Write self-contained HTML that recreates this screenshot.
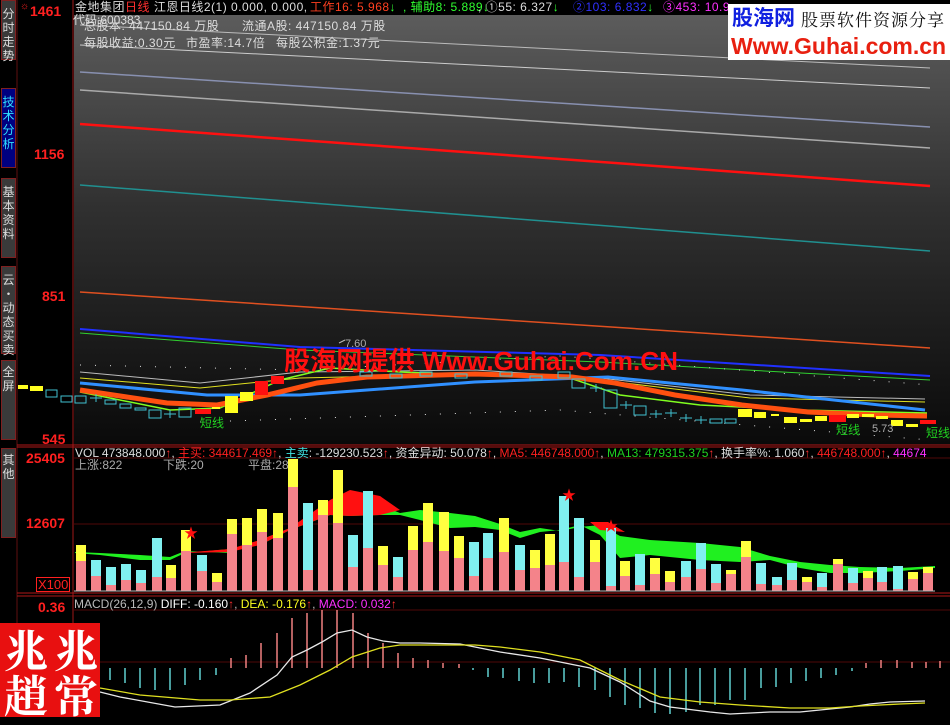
<!DOCTYPE html>
<html><head><meta charset="utf-8"><style>
*{margin:0;padding:0}
body{width:950px;height:717px;background:#000;overflow:hidden;position:relative;font-family:"Liberation Sans","Noto Sans CJK SC",sans-serif}
.t{position:absolute;font-size:12px;line-height:13px;white-space:nowrap}
.tab{position:absolute;left:1px;width:15px;background:#3a3a3a;border:1px solid #802020;color:#ddd;font-size:12px;line-height:14px;text-align:center;font-family:"Noto Sans CJK SC",sans-serif}
</style></head><body>
<svg width="950" height="717" style="position:absolute;left:0;top:0">
<defs><linearGradient id="bg" x1="0" y1="0" x2="0" y2="1">
<stop offset="0" stop-color="#5c5c5c"/><stop offset="0.45" stop-color="#303030"/><stop offset="1" stop-color="#0a0a0a"/></linearGradient></defs>
<rect x="74" y="15" width="876" height="430" fill="url(#bg)"/>
<line x1="73" y1="0" x2="73" y2="717" stroke="#a01818"/>
<line x1="17" y1="0" x2="17" y2="717" stroke="#601010"/>
<line x1="17" y1="445" x2="950" y2="445" stroke="#b01818"/>
<line x1="17" y1="447" x2="950" y2="447" stroke="#b01818"/>
<line x1="17" y1="593" x2="950" y2="593" stroke="#b01818"/>
<line x1="17" y1="596" x2="950" y2="596" stroke="#b01818"/>
<line x1="74" y1="458" x2="950" y2="458" stroke="#500808"/>
<line x1="74" y1="524" x2="950" y2="524" stroke="#500808"/>
<line x1="74" y1="610" x2="950" y2="610" stroke="#500808"/>
<line x1="74" y1="662" x2="950" y2="662" stroke="#500808"/>
<polyline points="80,25 930,68" stroke="#bbb" fill="none"/>
<polyline points="80,45 930,88" stroke="#ccc" fill="none"/>
<polyline points="80,72 930,127" stroke="#8890b0" fill="none" stroke-width="1.5"/>
<polyline points="80,90 930,148" stroke="#aaa" fill="none" stroke-width="1.5"/>
<polyline points="80,124 930,186" stroke="#ff1010" fill="none" stroke-width="2.5"/>
<polyline points="80,185 930,251" stroke="#209090" fill="none" stroke-width="1.5"/>
<polyline points="80,292 930,348" stroke="#e05020" fill="none" stroke-width="1.5"/>
<polyline points="80,329 300,347 600,355 930,376" stroke="#2030ff" fill="none" stroke-width="2"/>
<polyline points="80,333 300,350 600,362 930,380" stroke="#30d030" fill="none" stroke-width="1"/>
<polyline points="80,365 300,370 560,356 930,385" stroke="#ddd" fill="none" stroke-dasharray="1,14"/>
<polyline points="200,422 560,410 930,440" stroke="#ddd" fill="none" stroke-dasharray="1,14"/>
<polyline points="80,372 200,383 300,372 475,370 600,378 750,395 925,399" stroke="#bbb" fill="none"/>
<polyline points="80,378 200,388 300,378 475,374 600,380 750,398 925,402" stroke="#e0e020" fill="none"/>
<polyline points="80,392 170,410 220,408 280,380 330,368 400,372 475,375 570,378 620,395 700,405 800,410 927,413" stroke="#80ff20" fill="none" stroke-width="1.5"/>
<polyline points="80,383 207,395 300,395 367,390 475,382 608,377 742,390 925,410" stroke="#3090ff" fill="none" stroke-width="3"/>
<polyline points="80,390 167,403 217,405 267,395 317,383 367,377 475,374 572,377 615,383 675,395 742,405 808,412 875,415 927,416" stroke="#ff5010" fill="none" stroke-width="5"/>
<g fill="#ffff20">
<rect x="18" y="385" width="10" height="4"/><rect x="30" y="386" width="13" height="5"/>
<rect x="212" y="407" width="8" height="2"/><rect x="225" y="396" width="13" height="17"/><rect x="240" y="392" width="13" height="9"/>
<rect x="738" y="409" width="14" height="8"/><rect x="754" y="412" width="12" height="6"/><rect x="771" y="414" width="8" height="2"/><rect x="784" y="417" width="13" height="6"/><rect x="800" y="419" width="12" height="3"/><rect x="815" y="416" width="12" height="5"/><rect x="847" y="414" width="12" height="4"/><rect x="862" y="414" width="12" height="3"/><rect x="876" y="416" width="12" height="3"/><rect x="891" y="420" width="12" height="6"/><rect x="906" y="424" width="12" height="3"/>
</g>
<g fill="#ff1010"><rect x="195" y="409" width="16" height="5"/><rect x="255" y="381" width="13" height="14"/><rect x="271" y="376" width="13" height="8"/><rect x="829" y="415" width="17" height="7"/><rect x="920" y="420" width="16" height="4"/></g>
<g fill="none" stroke="#40c0d0">
<rect x="46" y="390" width="11" height="7"/><rect x="61" y="396" width="11" height="6"/><rect x="75" y="396" width="11" height="7"/><rect x="105" y="400" width="11" height="4"/><rect x="120" y="404" width="11" height="4"/><rect x="135" y="408" width="11" height="2"/><rect x="149" y="410" width="12" height="8"/><rect x="179" y="408" width="12" height="9"/>
<rect x="558" y="372" width="12" height="6"/><rect x="572" y="379" width="13" height="9"/><rect x="604" y="390" width="13" height="18"/><rect x="634" y="406" width="12" height="9"/><rect x="710" y="419" width="12" height="4"/><rect x="725" y="419" width="11" height="4"/>
<rect x="360" y="372" width="12" height="4"/><rect x="390" y="374" width="12" height="4"/><rect x="420" y="372" width="12" height="4"/><rect x="455" y="374" width="12" height="4"/><rect x="500" y="372" width="12" height="4"/><rect x="530" y="376" width="12" height="4"/>
<path d="M90,398h12M96,394v8M164,414h12M170,410v8M590,388h12M596,384v8M620,405h12M626,401v8M650,414h12M656,410v8M665,413h12M671,409v8M680,418h12M686,414v8M695,420h12M701,416v8"/>
</g>
<polyline points="339,343 345,340" stroke="#bbb" fill="none"/>
<text x="345" y="347" fill="#aaa" font-size="11" font-family="Liberation Sans">7.60</text>
<text x="872" y="432" fill="#aaa" font-size="11" font-family="Liberation Sans">5.73</text>
<g font-family="Noto Sans CJK SC,sans-serif" font-size="12" fill="#20d020">
<text x="200" y="427">短线</text><text x="836" y="434">短线</text><text x="926" y="437">短线</text></g>
<text x="284" y="370" fill="#ff1010" font-size="26" font-weight="bold" font-family="Liberation Sans,Noto Sans CJK SC,sans-serif" textLength="394" lengthAdjust="spacingAndGlyphs">股海网提供 Www.Guhai.Com.CN</text>
<polygon fill="#20f020" points="75,552 100,553 140,555 170,557 185,551 230,553 260,540 290,528 330,505 350,498 380,505 400,513 420,510 450,513 475,516 500,524 520,532 540,528 560,531 580,527 600,525 620,536 650,540 700,543 740,547 770,556 800,562 830,565 860,567 900,568 935,566 935,568 900,571 860,573 830,573 800,568 770,560 740,562 700,560 650,555 620,558 600,535 580,525 560,530 540,532 520,538 500,530 475,527 450,528 420,520 400,515 380,515 350,516 330,515 290,530 260,545 230,549 185,553 170,560 140,560 100,555 75,553"/>
<polygon fill="#ff1010" points="180,553 230,549 260,540 290,528 330,500 350,490 380,496 400,510 380,515 350,516 330,515 290,530 260,545 230,552"/>
<polygon fill="#ff1010" points="590,522 608,522 625,532 600,530"/>
<g>
<rect x="76" y="545" width="10" height="46" fill="#f4838a"/><rect x="76" y="545" width="10" height="16" fill="#ffff40"/>
<rect x="91" y="560" width="10" height="31" fill="#f4838a"/><rect x="91" y="560" width="10" height="16" fill="#80f0f0"/>
<rect x="106" y="567" width="10" height="24" fill="#f4838a"/><rect x="106" y="567" width="10" height="18" fill="#80f0f0"/>
<rect x="121" y="564" width="10" height="27" fill="#f4838a"/><rect x="121" y="564" width="10" height="16" fill="#80f0f0"/>
<rect x="136" y="570" width="10" height="21" fill="#f4838a"/><rect x="136" y="570" width="10" height="13" fill="#80f0f0"/>
<rect x="152" y="538" width="10" height="53" fill="#f4838a"/><rect x="152" y="538" width="10" height="39" fill="#80f0f0"/>
<rect x="166" y="565" width="10" height="26" fill="#f4838a"/><rect x="166" y="565" width="10" height="13" fill="#ffff40"/>
<rect x="181" y="530" width="10" height="61" fill="#f4838a"/><rect x="181" y="530" width="10" height="21" fill="#ffff40"/>
<rect x="197" y="555" width="10" height="36" fill="#f4838a"/><rect x="197" y="555" width="10" height="16" fill="#80f0f0"/>
<rect x="212" y="573" width="10" height="18" fill="#f4838a"/><rect x="212" y="573" width="10" height="9" fill="#ffff40"/>
<rect x="227" y="519" width="10" height="72" fill="#f4838a"/><rect x="227" y="519" width="10" height="15" fill="#ffff40"/>
<rect x="242" y="518" width="10" height="73" fill="#f4838a"/><rect x="242" y="518" width="10" height="27" fill="#ffff40"/>
<rect x="257" y="509" width="10" height="82" fill="#f4838a"/><rect x="257" y="509" width="10" height="23" fill="#ffff40"/>
<rect x="273" y="513" width="10" height="78" fill="#f4838a"/><rect x="273" y="513" width="10" height="25" fill="#ffff40"/>
<rect x="288" y="459" width="10" height="132" fill="#f4838a"/><rect x="288" y="459" width="10" height="28" fill="#ffff40"/>
<rect x="303" y="503" width="10" height="88" fill="#f4838a"/><rect x="303" y="503" width="10" height="67" fill="#80f0f0"/>
<rect x="318" y="500" width="10" height="91" fill="#f4838a"/><rect x="318" y="500" width="10" height="15" fill="#ffff40"/>
<rect x="333" y="470" width="10" height="121" fill="#f4838a"/><rect x="333" y="470" width="10" height="53" fill="#ffff40"/>
<rect x="348" y="535" width="10" height="56" fill="#f4838a"/><rect x="348" y="535" width="10" height="32" fill="#80f0f0"/>
<rect x="363" y="491" width="10" height="100" fill="#f4838a"/><rect x="363" y="491" width="10" height="57" fill="#80f0f0"/>
<rect x="378" y="546" width="10" height="45" fill="#f4838a"/><rect x="378" y="546" width="10" height="19" fill="#ffff40"/>
<rect x="393" y="557" width="10" height="34" fill="#f4838a"/><rect x="393" y="557" width="10" height="20" fill="#80f0f0"/>
<rect x="408" y="526" width="10" height="65" fill="#f4838a"/><rect x="408" y="526" width="10" height="24" fill="#ffff40"/>
<rect x="423" y="503" width="10" height="88" fill="#f4838a"/><rect x="423" y="503" width="10" height="39" fill="#ffff40"/>
<rect x="439" y="512" width="10" height="79" fill="#f4838a"/><rect x="439" y="512" width="10" height="39" fill="#ffff40"/>
<rect x="454" y="536" width="10" height="55" fill="#f4838a"/><rect x="454" y="536" width="10" height="22" fill="#ffff40"/>
<rect x="469" y="542" width="10" height="49" fill="#f4838a"/><rect x="469" y="542" width="10" height="34" fill="#80f0f0"/>
<rect x="483" y="533" width="10" height="58" fill="#f4838a"/><rect x="483" y="533" width="10" height="25" fill="#80f0f0"/>
<rect x="499" y="518" width="10" height="73" fill="#f4838a"/><rect x="499" y="518" width="10" height="34" fill="#ffff40"/>
<rect x="515" y="545" width="10" height="46" fill="#f4838a"/><rect x="515" y="545" width="10" height="25" fill="#80f0f0"/>
<rect x="530" y="550" width="10" height="41" fill="#f4838a"/><rect x="530" y="550" width="10" height="18" fill="#ffff40"/>
<rect x="545" y="534" width="10" height="57" fill="#f4838a"/><rect x="545" y="534" width="10" height="31" fill="#ffff40"/>
<rect x="559" y="496" width="10" height="95" fill="#f4838a"/><rect x="559" y="496" width="10" height="66" fill="#80f0f0"/>
<rect x="574" y="518" width="10" height="73" fill="#f4838a"/><rect x="574" y="518" width="10" height="59" fill="#80f0f0"/>
<rect x="590" y="540" width="10" height="51" fill="#f4838a"/><rect x="590" y="540" width="10" height="22" fill="#ffff40"/>
<rect x="606" y="528" width="10" height="63" fill="#f4838a"/><rect x="606" y="528" width="10" height="58" fill="#80f0f0"/>
<rect x="620" y="561" width="10" height="30" fill="#f4838a"/><rect x="620" y="561" width="10" height="15" fill="#ffff40"/>
<rect x="635" y="554" width="10" height="37" fill="#f4838a"/><rect x="635" y="554" width="10" height="31" fill="#80f0f0"/>
<rect x="650" y="558" width="10" height="33" fill="#f4838a"/><rect x="650" y="558" width="10" height="16" fill="#ffff40"/>
<rect x="665" y="571" width="10" height="20" fill="#f4838a"/><rect x="665" y="571" width="10" height="11" fill="#ffff40"/>
<rect x="681" y="561" width="10" height="30" fill="#f4838a"/><rect x="681" y="561" width="10" height="16" fill="#80f0f0"/>
<rect x="696" y="543" width="10" height="48" fill="#f4838a"/><rect x="696" y="543" width="10" height="26" fill="#80f0f0"/>
<rect x="711" y="564" width="10" height="27" fill="#f4838a"/><rect x="711" y="564" width="10" height="19" fill="#80f0f0"/>
<rect x="726" y="570" width="10" height="21" fill="#f4838a"/><rect x="726" y="570" width="10" height="4" fill="#ffff40"/>
<rect x="741" y="541" width="10" height="50" fill="#f4838a"/><rect x="741" y="541" width="10" height="16" fill="#ffff40"/>
<rect x="756" y="563" width="10" height="28" fill="#f4838a"/><rect x="756" y="563" width="10" height="21" fill="#80f0f0"/>
<rect x="772" y="577" width="10" height="14" fill="#f4838a"/><rect x="772" y="577" width="10" height="8" fill="#80f0f0"/>
<rect x="787" y="563" width="10" height="28" fill="#f4838a"/><rect x="787" y="563" width="10" height="17" fill="#80f0f0"/>
<rect x="802" y="577" width="10" height="14" fill="#f4838a"/><rect x="802" y="577" width="10" height="5" fill="#ffff40"/>
<rect x="817" y="573" width="10" height="18" fill="#f4838a"/><rect x="817" y="573" width="10" height="14" fill="#80f0f0"/>
<rect x="833" y="559" width="10" height="32" fill="#f4838a"/><rect x="833" y="559" width="10" height="5" fill="#ffff40"/>
<rect x="848" y="568" width="10" height="23" fill="#f4838a"/><rect x="848" y="568" width="10" height="15" fill="#80f0f0"/>
<rect x="863" y="571" width="10" height="20" fill="#f4838a"/><rect x="863" y="571" width="10" height="7" fill="#ffff40"/>
<rect x="877" y="567" width="10" height="24" fill="#f4838a"/><rect x="877" y="567" width="10" height="15" fill="#80f0f0"/>
<rect x="893" y="566" width="10" height="25" fill="#f4838a"/><rect x="893" y="566" width="10" height="23" fill="#80f0f0"/>
<rect x="908" y="572" width="10" height="19" fill="#f4838a"/><rect x="908" y="572" width="10" height="7" fill="#ffff40"/>
<rect x="923" y="567" width="10" height="24" fill="#f4838a"/><rect x="923" y="567" width="10" height="6" fill="#ffff40"/>
</g>
<line x1="74" y1="591" x2="935" y2="591" stroke="#bbb"/>
<g fill="#ff1010" font-size="14"><text x="184" y="538">★</text><text x="562" y="500">★</text><text x="604" y="531">★</text></g>
<g stroke="#60d0d0" stroke-width="1.5">
<path d="M110,668v12M125,668v15M140,668v20M155,668v22M170,668v22M185,668v17M200,668v12M216,668v7M473,668v2M488,668v9M503,668v10M519,668v13M534,668v15M549,668v15M564,668v14M579,668v19M595,668v22M610,668v29M625,668v37M640,668v40M655,668v45M670,668v46M686,668v44M700,668v37M715,668v37M730,668v32M745,668v32M761,668v20M776,668v19M791,668v15M806,668v13M821,668v10M836,668v7M852,668v3"/>
</g>
<g stroke="#f08080" stroke-width="1.5">
<path d="M231,668v-10M246,668v-13M261,668v-25M277,668v-35M292,668v-50M307,668v-55M322,668v-58M337,668v-58M353,668v-55M368,668v-35M383,668v-25M398,668v-15M413,668v-10M428,668v-8M443,668v-5M459,668v-4M866,668v-5M881,668v-8M897,668v-8M912,668v-6M926,668v-6M940,668v-7"/>
</g>
<polyline fill="none" stroke="#e8e8e8" stroke-width="1.3" points="100,692 120,697 175,707 220,705 250,693 277,675 292,657 307,650 322,642 337,633 352,630 367,637 383,641 400,643 420,643 460,644 475,647 500,652 540,658 590,668 620,682 650,701 670,707 710,712 730,714 770,712 800,712 830,709 850,707 870,704 890,702 925,701"/>
<polyline fill="none" stroke="#e0e020" stroke-width="1.3" points="100,688 140,695 200,700 230,700 270,697 300,685 330,670 352,657 380,648 400,645 440,645 475,645 500,647 540,652 580,660 620,680 660,697 700,702 740,705 790,708 830,708 860,706 900,704 925,703"/>
</svg>
<div class="tab" style="top:0;height:60px;padding-top:6px;box-sizing:border-box">分<br>时<br>走<br>势</div>
<div class="tab" style="top:88px;height:80px;background:#000080;color:#30e0ff;padding-top:6px;box-sizing:border-box">技<br>术<br>分<br>析</div>
<div class="tab" style="top:178px;height:80px;padding-top:6px;box-sizing:border-box">基<br>本<br>资<br>料</div>
<div class="tab" style="top:266px;height:88px;padding-top:6px;box-sizing:border-box">云<br>·<br>动<br>态<br>买<br>卖</div>
<div class="tab" style="top:360px;height:80px;padding-top:4px;box-sizing:border-box">全<br>屏</div>
<div class="tab" style="top:448px;height:90px;padding-top:4px;box-sizing:border-box">其<br>他</div>
<div class="t" style="left:30px;top:5px;color:#ff2020;font-weight:bold;font-size:14px">1461</div>
<div class="t" style="left:20px;top:0;color:#ff2020;font-size:10px">☼</div>
<div class="t" style="left:34px;top:148px;color:#ff2020;font-weight:bold;font-size:14px">1156</div>
<div class="t" style="left:42px;top:290px;color:#ff2020;font-weight:bold;font-size:14px">851</div>
<div class="t" style="left:42px;top:433px;color:#ff2020;font-weight:bold;font-size:14px">545</div>
<div class="t" style="left:26px;top:452px;color:#ff2020;font-weight:bold;font-size:14px">25405</div>
<div class="t" style="left:26px;top:517px;color:#ff2020;font-weight:bold;font-size:14px">12607</div>
<div class="t" style="left:36px;top:577px;color:#ff2020;font-size:13px;border:1px solid #ff2020;padding:0 1px">X100</div>
<div class="t" style="left:38px;top:601px;color:#ff2020;font-weight:bold;font-size:14px">0.36</div>
<div class="t" style="left:75px;top:1px;color:#ddd;letter-spacing:0.5px">金地集团<span style="color:#ff3030">日线</span> 江恩日线2(1) 0.000, 0.000,</div>
<div class="t" style="left:310px;top:1px;color:#ff4020;letter-spacing:0.5px">工作16: 5.968<span style="color:#30ff30">↓</span></div>
<div class="t" style="left:403px;top:1px;color:#30ff30;letter-spacing:0.5px">, 辅助8: 5.889↓</div>
<div class="t" style="left:478px;top:1px;color:#ddd;letter-spacing:0.5px">, ①55: 6.327<span style="color:#30ff30">↓</span></div>
<div class="t" style="left:573px;top:1px;color:#3030ff;letter-spacing:0.5px">②103: 6.832<span style="color:#30ff30">↓</span></div>
<div class="t" style="left:663px;top:1px;color:#ff30ff;letter-spacing:0.5px">③453: 10.9</div>
<div class="t" style="left:73px;top:14px;color:#ddd">代码:600383</div>
<div class="t" style="left:84px;top:20px;color:#ddd;letter-spacing:0.5px">总股本: 447150.84 万股</div>
<div class="t" style="left:242px;top:20px;color:#ddd;letter-spacing:0.5px">流通A股: 447150.84 万股</div>
<div class="t" style="left:84px;top:37px;color:#ddd;letter-spacing:0.5px">每股收益:0.30元</div>
<div class="t" style="left:186px;top:37px;color:#ddd;letter-spacing:0.5px">市盈率:14.7倍</div>
<div class="t" style="left:276px;top:37px;color:#ddd;letter-spacing:0.5px">每股公积金:1.37元</div>
<div style="position:absolute;left:728px;top:4px;width:222px;height:56px;background:#fff">
<div class="t" style="left:4px;top:3px;font-size:21px;line-height:24px;font-weight:bold;color:#1020e0">股海网</div>
<div class="t" style="left:73px;top:5px;font-size:17px;line-height:20px;color:#111;letter-spacing:1px;font-family:'Noto Serif CJK SC',serif">股票软件资源分享</div>
<div class="t" style="left:3px;top:29px;font-size:23px;line-height:26px;font-weight:bold;color:#e82010">Www.Guhai.com.cn</div>
</div>
<div class="t" style="left:75px;top:447px;color:#ddd">VOL 473848.000<span style="color:#ff3030">↑</span>, <span style="color:#ff2020">主买: 344617.469↑</span>, <span style="color:#40e0e0">主卖</span>: -129230.523<span style="color:#ff3030">↑</span>, 资金异动: 50.078<span style="color:#ff3030">↑</span>, <span style="color:#ff2020">MA5: 446748.000↑</span>, <span style="color:#20d020">MA13: 479315.375</span><span style="color:#ff3030">↑</span>, 换手率%: 1.060<span style="color:#ff3030">↑</span>, <span style="color:#ff2020">446748.000↑</span>, <span style="color:#ff30ff">44674</span></div>
<div class="t" style="left:75px;top:459px;color:#aaa">上涨:822</div>
<div class="t" style="left:163px;top:459px;color:#aaa">下跌:20</div>
<div class="t" style="left:248px;top:459px;color:#aaa">平盘:28</div>
<div class="t" style="left:74px;top:598px;color:#bbb">MACD(26,12,9) <span style="color:#fff">DIFF: -0.160</span><span style="color:#ff3030">↑</span>, <span style="color:#ffff20">DEA: -0.176</span><span style="color:#ff3030">↑</span>, <span style="color:#ff30ff">MACD: 0.032</span><span style="color:#ff3030">↑</span></div>
<div style="position:absolute;left:0;top:623px;width:100px;height:94px;background:#e81010;color:#fff;font-family:'Noto Serif CJK SC',serif;font-weight:bold">
<div class="t" style="left:4px;top:2px;font-size:44px;line-height:46px">兆</div>
<div class="t" style="left:4px;top:46px;font-size:44px;line-height:48px">趙</div>
<div class="t" style="left:54px;top:2px;font-size:44px;line-height:46px">兆</div>
<div class="t" style="left:54px;top:46px;font-size:44px;line-height:48px">常</div>
</div>
</body></html>
